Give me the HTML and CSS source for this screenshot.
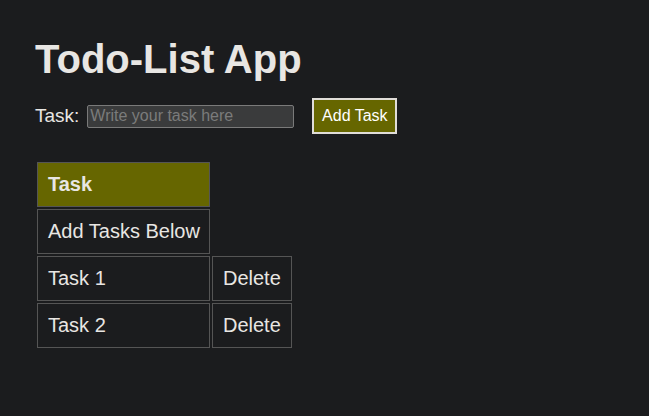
FILE: index.html
```html
<!DOCTYPE html>
<html>
<head>
<meta charset="utf-8">
<link rel="stylesheet" href="styles.css">
</head>
<body>
<div class="app">
  <h1 class="title">Todo-List App</h1>
  <div class="form-row">
    <label class="label" for="task">Task:</label>
    <input class="task-input" id="task" type="text" placeholder="Write your task here">
    <button class="add-btn">Add Task</button>
  </div>
  <table class="tasks">
    <tr><th class="head">Task</th></tr>
    <tr><td class="cell">Add Tasks Below</td></tr>
    <tr><td class="cell">Task 1</td><td class="cell">Delete</td></tr>
    <tr><td class="cell">Task 2</td><td class="cell">Delete</td></tr>
  </table>
</div>
</body>
</html>
```
FILE: styles.css
```css
html, body {
  margin: 0;
  background: #1b1c1e;
  color: #e8e6e3;
  font-family: "Liberation Sans", Arial, sans-serif;
}
.app {
  padding: 36px 35px;
}
.title {
  margin: 0;
  font-size: 40px;
  line-height: 46px;
  font-weight: bold;
}
.form-row {
  display: flex;
  align-items: center;
  margin-top: 16px;
}
.label {
  font-size: 19px;
  margin-right: 8px;
}
.task-input {
  box-sizing: border-box;
  width: 207px;
  height: 23px;
  margin: 0;
  padding: 1px 2px;
  font-family: "Liberation Sans", Arial, sans-serif;
  font-size: 16px;
  color: #e8e6e3;
  background: #3a3b3c;
  border: 1px solid #7a7a7a;
  border-radius: 2px;
}
.task-input::placeholder {
  color: #7b7b7b;
}
.add-btn {
  box-sizing: border-box;
  margin-left: 18px;
  height: 36px;
  width: 85px;
  padding: 0;
  font-family: "Liberation Sans", Arial, sans-serif;
  font-size: 16px;
  color: #ffffff;
  background: #666600;
  border: 2px solid #e0ddd8;
}
.tasks {
  margin-top: 26px;
  border-spacing: 2px;
  font-size: 20px;
}
.head, .cell {
  padding: 10px;
  border: 1px solid #555555;
  text-align: left;
  line-height: 23px;
}
.head, .cell:first-child {
  padding-right: 9px;
}
.head {
  background: #666600;
  font-weight: bold;
}
```
